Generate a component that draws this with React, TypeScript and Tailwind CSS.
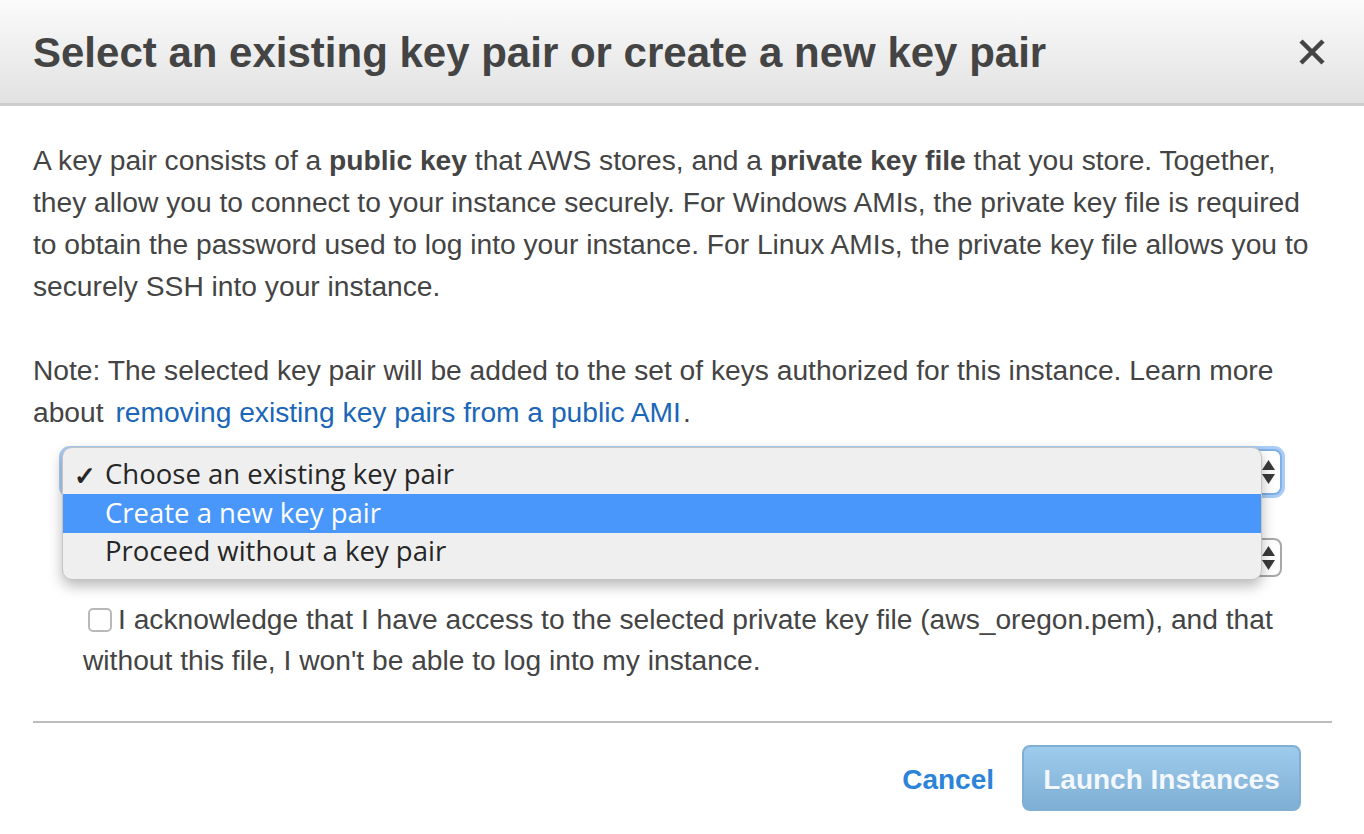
import React from "react";

const font = { fontFamily: '"Liberation Sans", Arial, Helvetica, sans-serif' };

function Stepper() {
  return (
    <svg width="15" height="28" viewBox="0 0 15 28" className="text-[#3a3a3a]">
      <path d="M7.5 2 L14 12 L1 12 Z" fill="currentColor" />
      <path d="M1 16 L14 16 L7.5 26 Z" fill="currentColor" />
    </svg>
  );
}

export default function App() {
  return (
    <div className="w-[1364px] h-[834px] bg-white text-[#444] overflow-hidden" style={font}>
      <div className="h-[106px] flex items-center justify-between pl-[33px] pr-[38px] bg-gradient-to-b from-[#fbfbfb] to-[#e2e2e2] border-b-[3px] border-[#cdcdcd]">
        <h1 className="text-[42px] font-bold text-[#444] pt-[2px]">
          Select an existing key pair or create a new key pair
        </h1>
        <svg width="28" height="28" viewBox="0 0 28 28">
          <path d="M3 3 L25 25 M25 3 L3 25" stroke="#444" strokeWidth="4.5" strokeLinecap="butt" />
        </svg>
      </div>

      <div className="px-[33px] pt-[33px] text-[28.2px] leading-[42px]">
        <p>
          <span className="block whitespace-nowrap">
            A key pair consists of a <b>public key</b> that AWS stores, and a <b>private key file</b> that you store. Together,
          </span>
          <span className="block whitespace-nowrap">
            they allow you to connect to your instance securely. For Windows AMIs, the private key file is required
          </span>
          <span className="block whitespace-nowrap">
            to obtain the password used to log into your instance. For Linux AMIs, the private key file allows you to
          </span>
          <span className="block whitespace-nowrap">securely SSH into your instance.</span>
        </p>

        <p className="mt-[42px]">
          <span className="block whitespace-nowrap">
            Note: The selected key pair will be added to the set of keys authorized for this instance. Learn more
          </span>
          <span className="block whitespace-nowrap">
            about <a className="text-[#1a66b8] ml-[4px] mr-[2px]">removing existing key pairs from a public AMI</a>.
          </span>
        </p>

        <div className="relative mt-[16px] ml-[29px] mr-[49px]">
          <div className="h-[46px] rounded-[8px] border-2 border-[#7fb0e8] ring-[3px] ring-[#a9cdf6] bg-white flex items-center justify-end pr-[4px]">
            <Stepper />
          </div>
          <div className="h-[39px] mt-[43px] rounded-[8px] border-2 border-[#a8a8a8] bg-white flex items-center justify-end pr-[4px]">
            <Stepper />
          </div>

          <div
            className="absolute left-0 top-[-2px] w-[1200px] pt-[8px] pb-[8px] rounded-[10px] bg-[#efefef] border border-[#c4c4c4] shadow-[0_6px_14px_rgba(0,0,0,0.28)] text-[27.5px] text-[#262626]"
            style={{ fontFamily: '"Open Sans", "Liberation Sans", Arial, sans-serif' }}
          >
            <div className="h-[38px] flex items-center">
              <span className="w-[42px] pl-[11px] text-[26px] font-bold">✓</span>
              <span className="-mt-[2px]">Choose an existing key pair</span>
            </div>
            <div className="h-[39px] flex items-center bg-[#4997fb] text-white">
              <span className="w-[42px]" />
              <span className="-mt-[2px]">Create a new key pair</span>
            </div>
            <div className="h-[38px] flex items-center">
              <span className="w-[42px]" />
              <span className="-mt-[2px]">Proceed without a key pair</span>
            </div>
          </div>
        </div>

        <div className="ml-[50px] mt-[22px] leading-[41px]">
          <span className="block whitespace-nowrap">
            <span className="inline-block align-[-3px] w-[24px] h-[24px] ml-[5px] mr-[6px] rounded-[5px] border-2 border-[#b9b9b9] bg-white" />
            I acknowledge that I have access to the selected private key file (aws_oregon.pem), and that
          </span>
          <span className="block whitespace-nowrap">without this file, I won't be able to log into my instance.</span>
        </div>

        <div className="mt-[40px] mr-[-1px] border-t-2 border-[#bdbdbd]" />

        <div className="flex justify-end items-center gap-[28px] pt-[22px] pr-[30px]">
          <a className="text-[28px] font-bold text-[#2b84d8] mt-[4px]">Cancel</a>
          <button className="h-[66px] w-[279px] rounded-[8px] border-2 border-[#80afd3] bg-gradient-to-b from-[#9dcbec] to-[#7eafd4] text-[28px] font-bold text-[#f2f8fd] pt-[4px] [text-shadow:0_1px_0_rgba(0,0,0,0.06)]">
            Launch Instances
          </button>
        </div>
      </div>
    </div>
  );
}
